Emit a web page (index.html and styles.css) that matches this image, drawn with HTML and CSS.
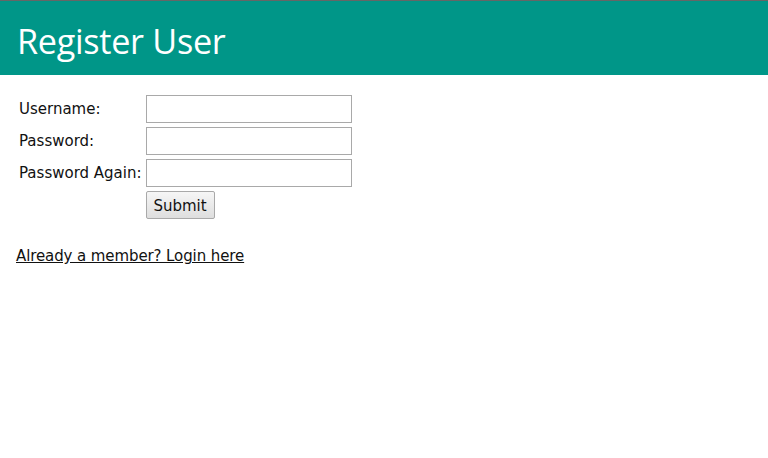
FILE: index.html
```html
<!DOCTYPE html>
<html>
<head>
<meta charset="utf-8">
<link rel="stylesheet" href="styles.css">
</head>
<body>
<header class="bar"><h1 class="title">Register User</h1></header>
<main class="content">
<form class="form">
<table class="grid">
<tr><td class="lbl">Username:</td><td><input class="field" type="text"></td></tr>
<tr><td class="lbl">Password:</td><td><input class="field" type="password"></td></tr>
<tr><td class="lbl">Password Again:</td><td><input class="field" type="password"></td></tr>
<tr><td></td><td><button class="btn" type="button">Submit</button></td></tr>
</table>
</form>
<a class="link" href="#">Already a member? Login here</a>
</main>
</body>
</html>
```
FILE: styles.css
```css
html, body { margin: 0; padding: 0; background: #fff; }
body { font-family: "DejaVu Sans", Verdana, sans-serif; font-size: 15px; color: #111; border-top: 1px solid #666; }
.bar { background: #009688; height: 74px; display: flex; align-items: center; padding: 5px 17px 0; box-sizing: border-box; }
.title { margin: 0; font-family: "Open Sans", sans-serif; font-weight: 400; font-size: 34.2px; color: #fff; letter-spacing: -0.3px; }
.content { padding: 17px 16px; }
.form { margin: 0; }
.grid { border-collapse: separate; border-spacing: 2px; margin-left: 0; }
.grid td { padding: 1px; }
.lbl { padding: 2px 2px 0 1px; }
.field { box-sizing: border-box; width: 206px; height: 28px; border: 1px solid #a9a9a9; margin: 0; padding: 2px 4px; font-family: inherit; font-size: 15px; display: block; }
.btn { box-sizing: border-box; height: 28px; width: 69px; border: 1px solid #a9a9a9; border-radius: 2px; background: linear-gradient(#f6f6f6, #dedede); font-family: "DejaVu Sans", Verdana, sans-serif; font-size: 15px; color: #111; padding: 1px 0 0; display: block; }
.link { display: inline-block; margin-top: 25px; color: #111; text-decoration: underline; letter-spacing: -0.1px; }
```
